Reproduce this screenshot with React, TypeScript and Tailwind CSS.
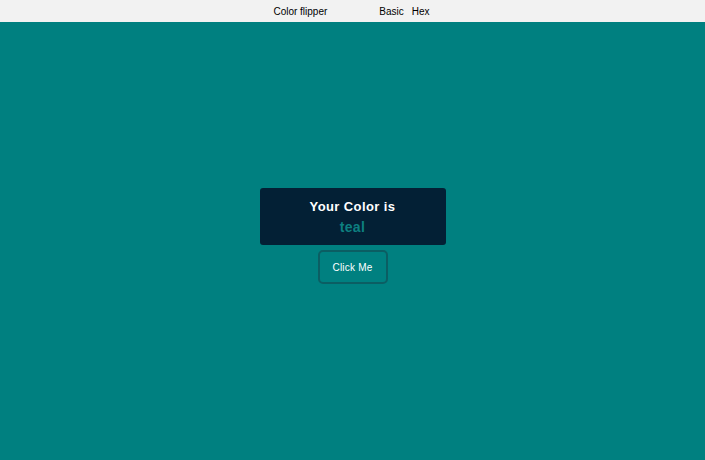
export default function App() {
  return (
    <div className="w-[705px] h-[460px] flex flex-col bg-[#008080] font-['Liberation_Sans',Arial,sans-serif]">
      <nav className="h-[22px] bg-[#f2f2f2] flex items-center justify-center text-[10px] text-black">
        <span className="ml-[-2px]">Color flipper</span>
        <ul className="flex gap-[8px] ml-[52px]">
          <li>Basic</li>
          <li>Hex</li>
        </ul>
      </nav>
      <main className="flex-1 flex flex-col items-center justify-center pb-[10px]">
        <div className="w-[186px] h-[57px] bg-[#032035] rounded-[3px] flex flex-col items-center justify-center">
          <h2 className="text-white text-[13px] font-bold tracking-[0.4px] leading-[20px]">Your Color is</h2>
          <span className="text-[#0d7f80] text-[14px] font-bold tracking-[0.4px] leading-[20px]">teal</span>
        </div>
        <button className="mt-[5px] w-[70px] h-[34px] border-2 border-[#0b5e63] rounded-[5px] text-white text-[10px] tracking-[0.2px]">
          Click Me
        </button>
      </main>
    </div>
  );
}
